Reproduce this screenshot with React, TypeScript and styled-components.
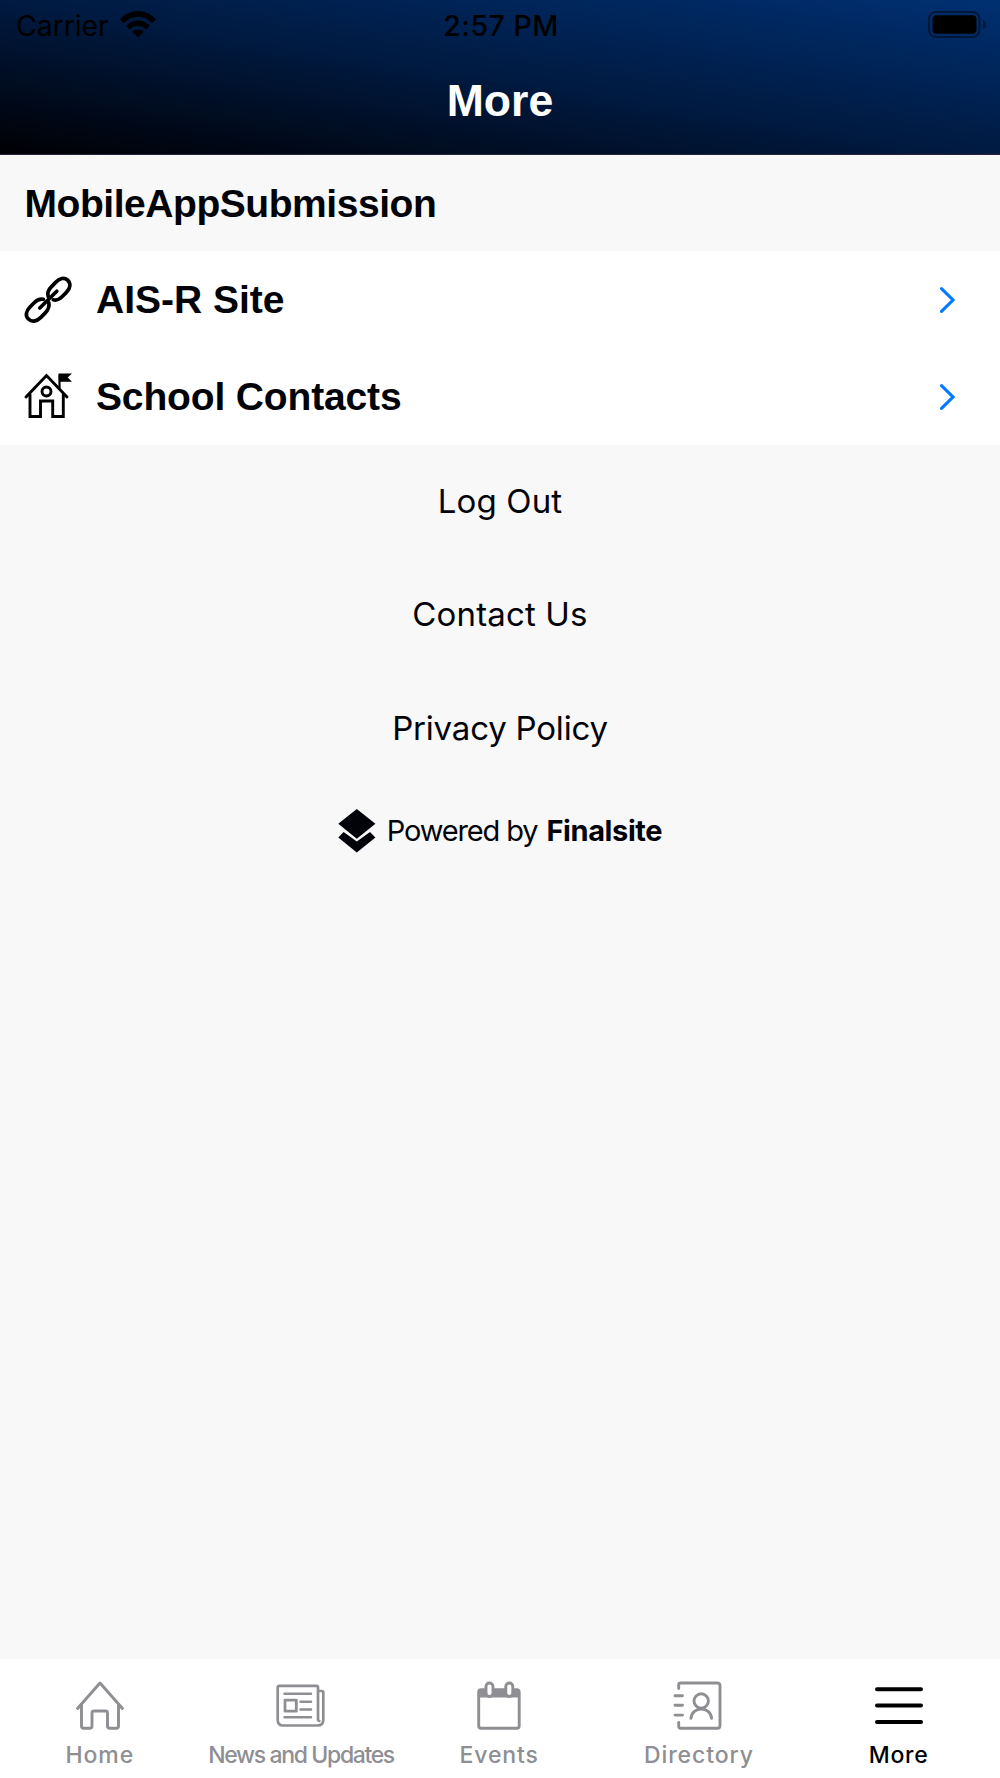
import React from "react";
import styled, { createGlobalStyle } from "styled-components";

const GlobalStyle = createGlobalStyle`
  *, *::before, *::after { box-sizing: border-box; }
  body { margin: 0; background: #f8f8f8; }
  svg { display: block; flex: none; overflow: visible; }
`;

const Screen = styled.div`
  display: flex;
  flex-direction: column;
  width: 1000px;
  height: 1778px;
  background: #f8f8f8;
  color: #020308;
  font-family: Inter, "Liberation Sans", sans-serif;
  overflow: hidden;
`;

const Header = styled.header`
  display: flex;
  flex-direction: column;
  height: 155px;
  flex: none;
  background: linear-gradient(to top right, #000004 0%, #001a41 50%, #003072 100%);
  border-bottom: 1px solid #25243a;
`;

const StatusBar = styled.div`
  display: grid;
  grid-template-columns: 1fr auto 1fr;
  align-items: center;
  height: 50px;
  padding: 0 14px 0 16px;
  color: #000;
`;

const Carrier = styled.div`
  display: flex;
  align-items: center;
  gap: 11px;

  svg { margin-bottom: 2px; }
`;

const StatusText = styled.span<{ $weight: number; $spacing: number }>`
  padding-top: 1px;
  font-size: 28.5px;
  line-height: 50px;
  font-weight: ${(p) => p.$weight};
  letter-spacing: ${(p) => p.$spacing}px;
  white-space: nowrap;
`;

const Battery = styled.div`
  display: flex;
  justify-content: flex-end;
  padding-bottom: 2px;
`;

const Title = styled.h1`
  margin: 0;
  padding-top: 25px;
  text-align: center;
  font: 700 44.6px/52px "Liberation Sans", Arial, sans-serif;
  color: #fff;
`;

const SectionTitle = styled.h2`
  display: flex;
  align-items: center;
  flex: none;
  height: 96px;
  margin: 0;
  padding: 2px 25px 0 24.5px;
  font: 700 39px/46px "Liberation Sans", Arial, sans-serif;
  letter-spacing: -0.45px;
`;

const Menu = styled.nav`
  display: flex;
  flex-direction: column;
  flex: none;
  background: #fff;
`;

const MenuRow = styled.a`
  display: flex;
  align-items: center;
  height: 96.75px;
  padding: 1px 44px 0 24px;
`;

const MenuLabel = styled.span<{ $spacing: number }>`
  flex: 1;
  padding: 1px 0 0 24px;
  font: 700 39px/46px "Liberation Sans", Arial, sans-serif;
  letter-spacing: ${(p) => p.$spacing}px;
`;

const Links = styled.div`
  display: flex;
  flex-direction: column;
  align-items: center;
  flex: none;
`;

const TextLink = styled.a<{ $spacing: number }>`
  height: 113.5px;
  font-size: 33px;
  line-height: 112.4px;
  letter-spacing: ${(p) => p.$spacing}px;
`;

const Powered = styled.footer`
  display: flex;
  justify-content: center;
  align-items: center;
  height: 46px;
  margin-top: 23px;
  gap: 11px;
  font-size: 29px;
  letter-spacing: -1.15px;
`;

const PoweredText = styled.span`
  padding-bottom: 1px;
`;

const Brand = styled.strong`
  margin-left: 2px;
  font-weight: 700;
  letter-spacing: -0.4px;
`;

const TabBar = styled.nav`
  display: grid;
  grid-template-columns: repeat(5, 199.7px);
  flex: none;
  height: 118.6px;
  margin-top: auto;
  background: #fff;
`;

const Tab = styled.a<{ $active?: boolean }>`
  display: flex;
  flex-direction: column;
  align-items: center;
  padding-top: 21px;
  color: ${(p) => (p.$active ? "#000" : "#8e8e93")};
`;

const TabLabel = styled.span<{ $spacing: number }>`
  margin-top: 8px;
  padding-left: ${(p) => (p.$spacing < 0 ? 3 : 0)}px;
  font-size: 23px;
  font-weight: 500;
  line-height: 30px;
  letter-spacing: ${(p) => p.$spacing}px;
  white-space: nowrap;
`;

const WifiIcon = () => (
  <svg width="36" height="27" viewBox="0 0 36 27" fill="#000">
    <path d="M0 8.6C10-2.8 26-2.8 36 8.6L32.4 12.2C24.2 3.6 11.8 3.6 3.6 12.2Z" />
    <path d="M6.1 14.7C12.8 7.8 23.2 7.8 29.9 14.7L26.2 18.4C21.5 13.9 14.5 13.9 9.8 18.4Z" />
    <path d="M12.2 20.8C15.7 17.7 20.3 17.7 23.8 20.8L18 26.6Z" />
  </svg>
);

const BatteryIcon = () => (
  <svg width="58" height="27" viewBox="0 0 58 27">
    <rect x="1" y="1" width="50.5" height="25" rx="7" fill="none" stroke="#000" strokeOpacity=".45" strokeWidth="2" />
    <rect x="4.5" y="4.3" width="44" height="18.4" rx="4" fill="#000" />
    <path d="M55 8.5c4 1.8 4 8 0 10z" fill="#000" fillOpacity=".5" />
  </svg>
);

const LinkIcon = () => (
  <svg width="48" height="48" viewBox="0 0 48 48" fill="none" stroke="#000" strokeWidth="3.7" strokeLinecap="round">
    <path d="M24.2 20.5C23 16.8 24.3 13.9 27.3 10.9L31.4 6.6C35.6 2 40.4 1 43.6 4.1C47 7.4 46.6 12.2 42.4 16.4L38 20.8C35 23.8 32.4 24.6 29.3 23.8" />
    <path d="M19.4 23.3C15.8 22.5 13.2 23.7 10.2 26.7L6 31C1.8 35.3 1.2 39.8 4.4 43C7.6 46.2 12.4 45.8 16.6 41.6L20.8 37.4C24.4 33.8 25.9 31 24.8 26.8" />
    <path d="M15.8 32L32.8 15.2" />
  </svg>
);

const SchoolIcon = () => (
  <svg width="48" height="48" viewBox="0 0 48 48" fill="none" stroke="#000" strokeWidth="2.9" strokeLinecap="round">
    <path d="M2 24L22.5 2.6L43 24" />
    <path d="M6 21.5V43.5H16.5V28H28.7V43.5H39.3V21.5" />
    <circle cx="22.5" cy="18.5" r="4.5" />
    <path d="M35.5 15V2" strokeWidth="2.2" strokeLinecap="butt" />
    <path d="M34.5 .5H48L43.7 4.5L48 8.7H35Z" fill="#000" stroke="none" />
  </svg>
);

const Chevron = () => (
  <svg width="16" height="26" viewBox="0 0 16 26" fill="none" stroke="#007aff" strokeWidth="3.1" strokeLinecap="round">
    <path d="M1.5 1.7L13 13L1.5 24.3" />
  </svg>
);

const FinalsiteLogo = () => (
  <svg width="38" height="44" viewBox="0 0 38 44" fill="#020308">
    <path d="M18.8 0L37.4 14.8L18.8 29.7L.3 14.8Z" />
    <path d="M5.6 22.9L18.8 32.6L32 22.9L37.4 28.4L18.8 43.4L.3 28.4Z" />
  </svg>
);

const TabIcon = ({ children }: { children: React.ReactNode }) => (
  <svg width="50" height="52" viewBox="0 0 50 52" fill="none" stroke="currentColor" strokeWidth="2.9" strokeLinecap="round" strokeLinejoin="round">
    {children}
  </svg>
);

const HomeIcon = () => (
  <TabIcon>
    <path d="M2.5 28.5L25 3L47.5 28.5" />
    <path d="M6.5 25V46Q6.5 48.3 9 48.3H14.5Q17 48.3 17 46V33Q17 31 19 31H30.5Q32.5 31 32.5 33V46Q32.5 48.3 35 48.3H41Q43.5 48.3 43.5 46V25" />
  </TabIcon>
);

const NewsIcon = () => (
  <TabIcon>
    <path d="M43 40V7.5Q43 5.8 41.2 5.8H4.5Q2.7 5.8 2.7 7.5V40Q2.7 45.5 8.2 45.5H42.5Q48.3 45.5 48.3 39.5V12.5Q48.3 11 46.8 11H43V37.5Q43 41 44.3 41" strokeWidth="2.7" />
    <path d="M9.5 13.8H36M25.5 21.8H36M25.5 29.4H36M9.5 37.3H36" strokeWidth="2.5" />
    <rect x="10" y="20.2" width="11.3" height="11" strokeWidth="2.8" />
  </TabIcon>
);

const EventsIcon = () => (
  <TabIcon>
    <rect x="4.7" y="9.7" width="40.5" height="38.6" rx="2.5" />
    <path d="M4.5 9.7H45.2V17.5H4.5Z" fill="currentColor" stroke="none" />
    <rect x="12" y="3" width="7" height="13.5" rx="3.5" fill="#fff" />
    <rect x="31.8" y="3" width="7" height="13.5" rx="3.5" fill="#fff" />
  </TabIcon>
);

const DirectoryIcon = () => (
  <TabIcon>
    <path d="M4.7 8.5V5Q4.7 3 6.7 3H43.2Q46 3 46 5.8V45.5Q46 48.3 43.2 48.3H6.7Q4.7 48.3 4.7 46.3V42.5" />
    <path d="M1 15.8H8.5M1 25.3H8.5M1 35.1H8.5" />
    <circle cx="27.2" cy="21" r="7.2" />
    <path d="M16.9 38.3C18 25.8 36.5 25.8 37.6 38.3" />
  </TabIcon>
);

const MoreIcon = () => (
  <TabIcon>
    <path d="M3 9.2H47M3 25.6H47M3 41.9H47" strokeWidth="4" />
  </TabIcon>
);

const tabs = [
  { label: "Home", Icon: HomeIcon, spacing: 0.95 },
  { label: "News and Updates", Icon: NewsIcon, spacing: -1.35 },
  { label: "Events", Icon: EventsIcon, spacing: 0.9 },
  { label: "Directory", Icon: DirectoryIcon, spacing: 0.9 },
  { label: "More", Icon: MoreIcon, spacing: 0.7, active: true },
];

export default function App() {
  return (
    <Screen>
      <GlobalStyle />
      <Header>
        <StatusBar>
          <Carrier>
            <StatusText $weight={400} $spacing={-0.1}>Carrier</StatusText>
            <WifiIcon />
          </Carrier>
          <StatusText $weight={500} $spacing={0.5}>2:57 PM</StatusText>
          <Battery>
            <BatteryIcon />
          </Battery>
        </StatusBar>
        <Title>More</Title>
      </Header>
      <SectionTitle>MobileAppSubmission</SectionTitle>
      <Menu>
        <MenuRow>
          <LinkIcon />
          <MenuLabel $spacing={0}>AIS-R Site</MenuLabel>
          <Chevron />
        </MenuRow>
        <MenuRow>
          <SchoolIcon />
          <MenuLabel $spacing={-0.15}>School Contacts</MenuLabel>
          <Chevron />
        </MenuRow>
      </Menu>
      <Links>
        <TextLink $spacing={0.15}>Log Out</TextLink>
        <TextLink $spacing={0.15}>Contact Us</TextLink>
        <TextLink $spacing={-0.2}>Privacy Policy</TextLink>
      </Links>
      <Powered>
        <FinalsiteLogo />
        <PoweredText>
          Powered by <Brand>Finalsite</Brand>
        </PoweredText>
      </Powered>
      <TabBar>
        {tabs.map(({ label, Icon, spacing, active }) => (
          <Tab key={label} $active={active}>
            <Icon />
            <TabLabel $spacing={spacing}>{label}</TabLabel>
          </Tab>
        ))}
      </TabBar>
    </Screen>
  );
}
